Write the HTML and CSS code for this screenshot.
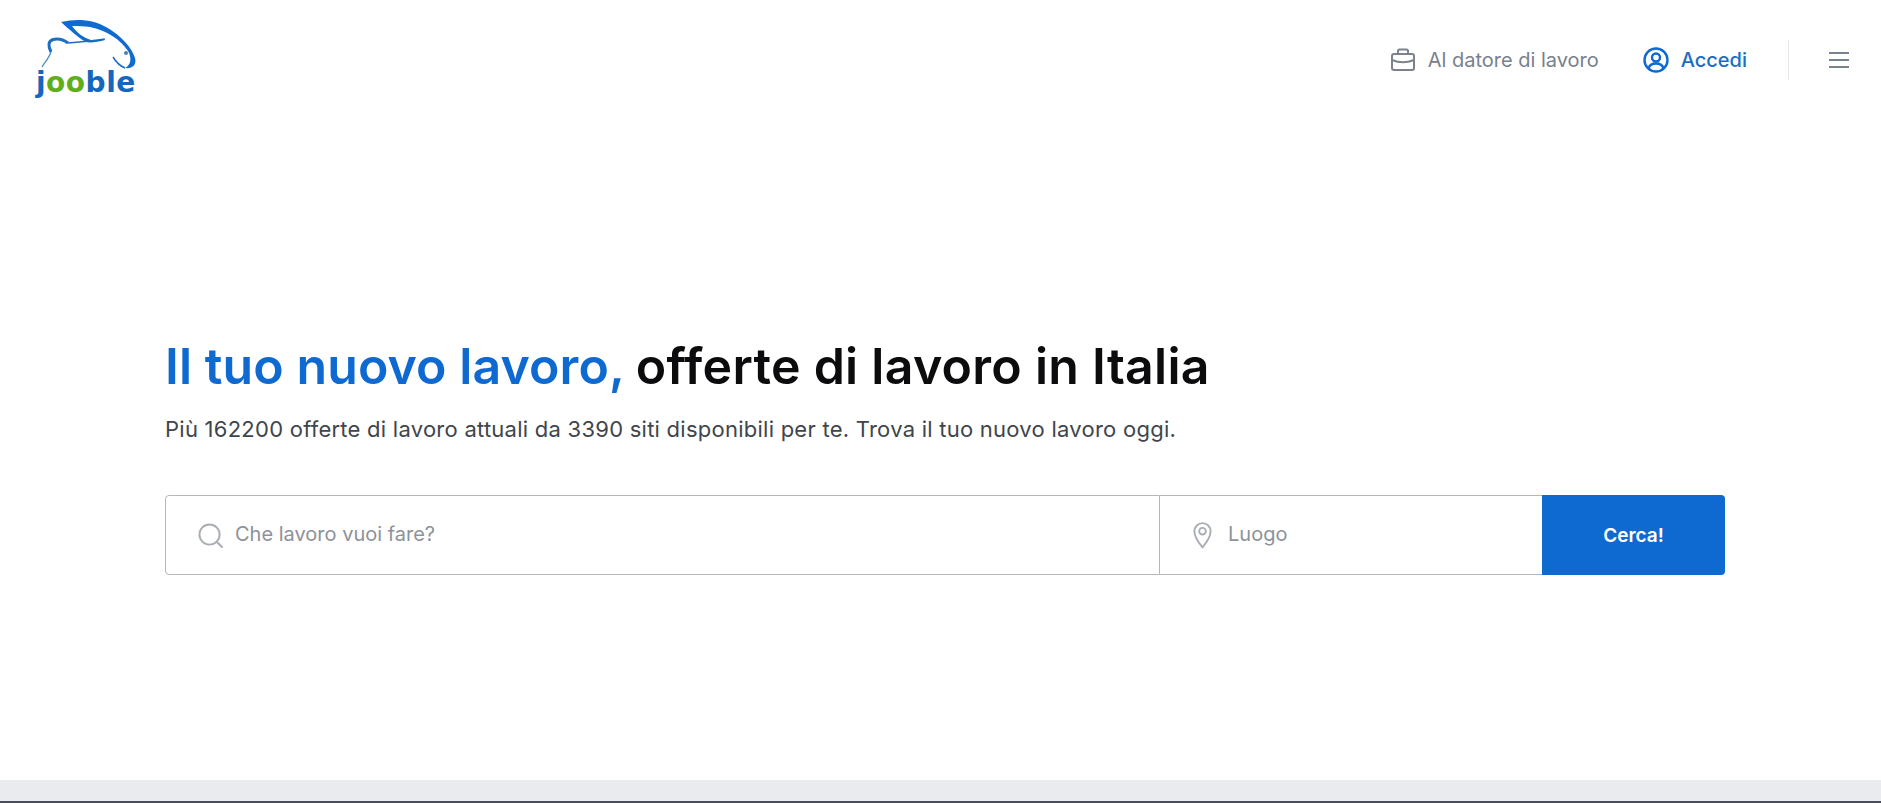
FILE: index.html
```html
<!DOCTYPE html>
<html lang="it">
<head>
<meta charset="UTF-8">
<meta name="viewport" content="width=device-width, initial-scale=1.0">
<title>Jooble</title>
<link rel="stylesheet" href="styles.css">
</head>
<body>
<div class="page">
    <header class="header">
        <a class="logo" href="#">
            <svg class="logo-rabbit" width="110" height="56" viewBox="0 0 110 56" fill="none">
                <path d="M31 7C48 3 64 5 76 12C92 21 102 33 105 43C107 50 102 54 95 53C101 50 102 43 98 36C91 25 76 15 60 12C54 11 48 11 42 11C47 18 54 23 61 25L75 25C68 27 60 28 56 27C47 22 39 14 31 7Z" fill="#0f6bd0"/>
                <path d="M21 37C18 31 18 26 23 24.500C29 23 34 25 38 28" stroke="#1a6fc4" stroke-width="3"/>
                <path d="M38 28C50 27 62 26 75 24" stroke="#1a6fc4" stroke-width="1.500"/>
                <path d="M12 52C15 47 19 43 21 37" stroke="#4d8ccc" stroke-width="1.300"/>
                <path d="M83 42C86 47 90 51 95 53" stroke="#1a6fc4" stroke-width="1.500"/>
                <circle cx="96" cy="38" r="2" fill="#4d7fb5"/>
            </svg>
            <span class="logo-text"><span class="logo-blue">j</span><span class="logo-green">oo</span><span class="logo-blue">ble</span></span>
        </a>
        <nav class="nav">
            <a class="nav-link" href="#">
                <svg width="24" height="24" viewBox="0 0 24 24" fill="none" stroke="#7b828c" stroke-width="2" stroke-linejoin="round">
                    <rect x="1" y="6" width="22" height="16" rx="2"/>
                    <path d="M7 6V3a1.500 1.500 0 0 1 1.500-1.500h7A1.500 1.500 0 0 1 17 3v3M1 12c7 3 15 3 22 0"/>
                </svg>
                Al datore di lavoro
            </a>
            <a class="nav-link nav-login" href="#">
                <svg width="26" height="26" viewBox="0 0 26 26" fill="none" stroke="#0e6ad0" stroke-width="2.400">
                    <circle cx="13" cy="13" r="11.500"/>
                    <circle cx="13" cy="10.500" r="4"/>
                    <path d="M5.500 21.500c1-3.800 4-5 7.500-5s6.500 1.200 7.500 5"/>
                </svg>
                Accedi
            </a>
            <button class="menu-btn" type="button" aria-label="Menu">
                <span></span><span></span><span></span>
            </button>
        </nav>
    </header>

    <main class="hero">
        <h1><span class="accent">Il tuo nuovo lavoro,</span> <span class="title-rest">offerte di lavoro in Italia</span></h1>
        <p class="subtitle">Più 162200 offerte di lavoro attuali da 3390 siti disponibili per te. Trova il tuo nuovo lavoro oggi.</p>
        <form class="search">
            <label class="field field-job">
                <svg width="25" height="25" viewBox="0 0 26 26" fill="none" stroke="#a9aeb5" stroke-width="2" stroke-linecap="round">
                    <circle cx="12" cy="12" r="10.500"/>
                    <path d="M20 20l5 5"/>
                </svg>
                <input type="text" placeholder="Che lavoro vuoi fare?">
            </label>
            <label class="field field-place">
                <svg width="19" height="28" viewBox="0 0 20 28" fill="none" stroke="#a9aeb5" stroke-width="2">
                    <path d="M10 27C5 21 1.500 16 1.500 10a8.500 8.500 0 0 1 17 0C18.500 16 15 21 10 27Z"/>
                    <circle cx="10" cy="10" r="3.500"/>
                </svg>
                <input type="text" placeholder="Luogo">
            </label>
            <button class="search-btn" type="button">Cerca!</button>
        </form>
    </main>

    <div class="footer-strip"></div>
</div>
</body>
</html>
```

FILE: styles.css
```css
* {
    box-sizing: border-box;
}

body {
    margin: 0;
    font-family: Inter, "Liberation Sans", sans-serif;
    background-color: #ffffff;
    color: #0c0c0e;
}

a {
    text-decoration: none;
}

.page {
    height: 803px;
    display: flex;
    flex-direction: column;
    overflow: hidden;
}

.header {
    height: 120px;
    padding: 15px 32px 0 30px;
    display: flex;
    justify-content: space-between;
    align-items: flex-start;
}

.logo {
    width: 110px;
    display: flex;
    flex-direction: column;
}

.logo-rabbit {
    display: block;
}

.logo-text {
    margin: -4px 0 0 6px;
    font-family: "DejaVu Sans", sans-serif;
    font-size: 28px;
    font-weight: 700;
    line-height: 32px;
    letter-spacing: 0.5px;
}

.logo-blue {
    color: #1466c0;
}

.logo-green {
    color: #5fae1c;
}

.nav {
    height: 40px;
    margin-top: 25px;
    display: flex;
    align-items: center;
}

.nav-link {
    display: flex;
    align-items: center;
    gap: 13px;
    font-size: 20px;
    color: #78818d;
}

.nav-login {
    margin-left: 44px;
    gap: 12px;
    font-weight: 500;
    color: #1a6ec4;
}

.menu-btn {
    height: 40px;
    width: 61px;
    margin-left: 41px;
    padding: 0 0 0 40px;
    border: none;
    border-left: 1px solid #e6e8eb;
    background: none;
    display: flex;
    flex-direction: column;
    justify-content: center;
    gap: 5px;
}

.menu-btn span {
    display: block;
    width: 20px;
    height: 2px;
    background-color: #78818d;
}

.hero {
    flex: 1;
    padding: 214px 156px 0 165px;
}

h1 {
    margin: 0;
    font-size: 50px;
    font-weight: 600;
    line-height: 64px;
    letter-spacing: 0.1px;
}

.accent {
    margin-right: -2px;
    color: #0e6ad0;
}

.title-rest {
    letter-spacing: 0.28px;
}

.subtitle {
    margin: 16px 0 0;
    font-size: 22px;
    line-height: 30px;
    letter-spacing: 0.25px;
    color: #40454c;
}

.search {
    height: 80px;
    margin-top: 51px;
    display: flex;
}

.field {
    display: flex;
    align-items: center;
    border: 1px solid #b4b7bc;
    background-color: #ffffff;
}

.field input {
    flex: 1;
    min-width: 0;
    border: none;
    outline: none;
    padding: 0 0 2px;
    background: none;
    font-family: inherit;
    font-size: 20px;
}

.field input::placeholder {
    color: #8d9299;
    opacity: 1;
}

.field-job {
    width: 995px;
    padding-left: 32px;
    gap: 12px;
    border-radius: 4px 0 0 4px;
}

.field-place {
    width: 382px;
    padding-left: 33px;
    gap: 16px;
    border-left: none;
    border-right: none;
}

.search-btn {
    width: 183px;
    border: none;
    border-radius: 0 4px 4px 0;
    background-color: #0e6ad0;
    color: #ffffff;
    font-family: inherit;
    font-size: 19px;
    font-weight: 600;
}

.footer-strip {
    height: 23px;
    background-color: #e9ebef;
    border-bottom: 2px solid #4b4d5c;
}
```
